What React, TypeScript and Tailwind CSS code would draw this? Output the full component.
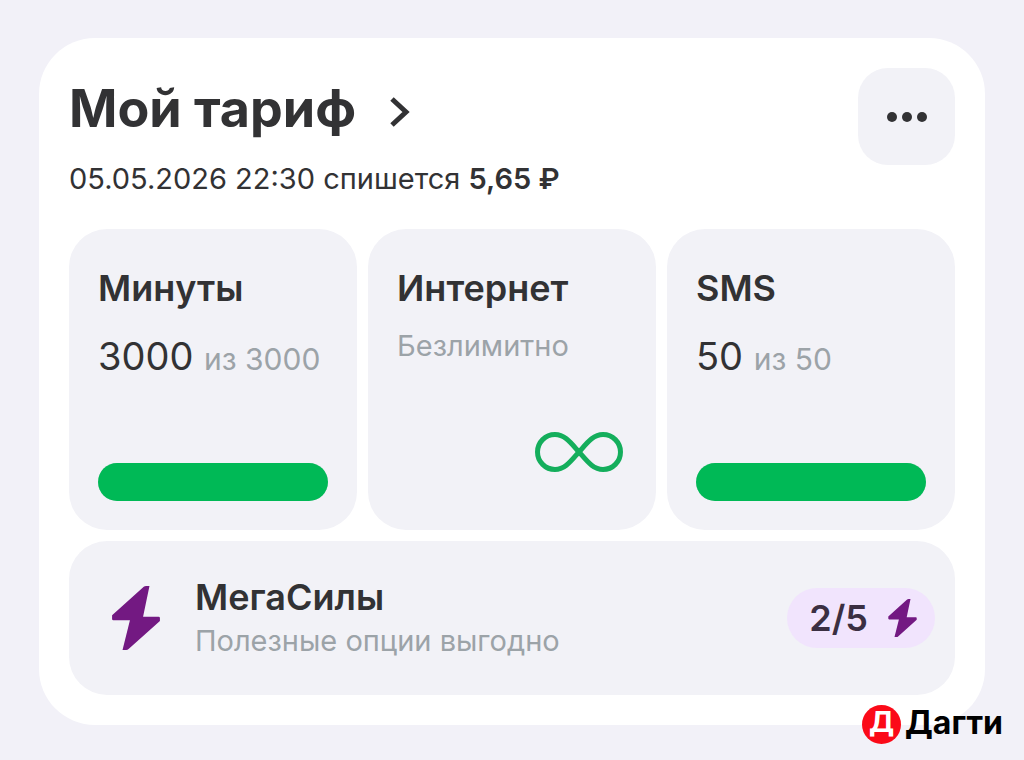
import type { ReactNode } from "react";

function BoltIcon({ className }: { className?: string }) {
  return (
    <svg viewBox="0 0 142 190" className={className} fill="#731982" aria-hidden="true">
      <path d="M94 2 Q97 0 101 0 H111 L92 91 H138 Q142 91 142 95 V104 L49 187 Q46 190 42 190 H31 L53 102 H4 Q0 102 0 98 V87 Z" />
    </svg>
  );
}

function InfinityIcon() {
  return (
    <svg viewBox="0 0 88 40" className="h-10 w-[88px]" fill="none" stroke="#14ae5c" strokeWidth="5" aria-hidden="true">
      <path d="M44 20 C36 11 30 2.5 20 2.5 A17.5 17.5 0 0 0 20 37.5 C30 37.5 36 29 44 20 C52 11 58 2.5 68 2.5 A17.5 17.5 0 0 1 68 37.5 C58 37.5 52 29 44 20 Z" />
    </svg>
  );
}

function Tile({ label, children }: { label: string; children: ReactNode }) {
  return (
    <section className="flex min-h-[301px] flex-col rounded-[38px] bg-[#f2f2f7] px-[29px] pt-[39px] pb-[29px]">
      <h2 className="text-[36px] leading-10 font-semibold">{label}</h2>
      {children}
    </section>
  );
}

function Quota({ left, total }: { left: number; total: number }) {
  return (
    <>
      <p className="mt-[26px] text-[38px] leading-11 whitespace-nowrap">
        {left} <span className="text-[30px] text-[#9ca3a8]">из {total}</span>
      </p>
      <div className="mt-auto h-[38px] rounded-full bg-[#dcdce3]">
        <div className="h-full rounded-full bg-[#00b956]" style={{ width: `${(left / total) * 100}%` }} />
      </div>
    </>
  );
}

export default function App() {
  return (
    <div className="relative min-h-screen bg-[#f2f1f8] px-[39px] py-[38px] font-['Inter',sans-serif] text-[#323234]">
      <main className="rounded-[56px] bg-white p-[30px]">
        <header className="flex items-start justify-between">
          <div className="pt-[11px]">
            <h1 className="text-[52px] leading-[60px] font-bold">
              <a href="#tariff" className="flex items-center gap-[34px]">
                Мой тариф
                <svg viewBox="0 0 20 30" className="mt-1.5 h-[30px] w-5" fill="none" stroke="currentColor" strokeWidth="5" aria-hidden="true">
                  <path d="M2 2 L16 15 L2 28" />
                </svg>
              </a>
            </h1>
            <p className="mt-5 text-[29px] leading-10">
              05.05.2026 22:30 спишется <b className="font-semibold">5,65 ₽</b>
            </p>
          </div>
          <button
            type="button"
            aria-label="Ещё"
            className="flex size-[97px] items-center justify-center gap-[5px] rounded-[30px] bg-[#f2f2f7]"
          >
            <span className="size-[10px] rounded-full bg-[#323234]" />
            <span className="size-[10px] rounded-full bg-[#323234]" />
            <span className="size-[10px] rounded-full bg-[#323234]" />
          </button>
        </header>

        <div className="mt-[30px] grid grid-cols-3 gap-[11px]">
          <Tile label="Минуты">
            <Quota left={3000} total={3000} />
          </Tile>
          <Tile label="Интернет">
            <p className="mt-4 text-[29px] leading-11 text-[#9ca3a8]">Безлимитно</p>
            <div className="mt-auto mr-1 mb-[29px] self-end">
              <InfinityIcon />
            </div>
          </Tile>
          <Tile label="SMS">
            <Quota left={50} total={50} />
          </Tile>
        </div>

        <a
          href="#megapowers"
          className="mt-[11px] flex min-h-[154px] items-center rounded-[38px] bg-[#f2f2f7] pr-5 pl-[43px]"
        >
          <BoltIcon className="h-16 w-12" />
          <div className="ml-[35px] flex-1 pt-0.5">
            <h2 className="text-[36px] leading-11 font-semibold">МегаСилы</h2>
            <p className="text-[29px] leading-11 text-[#9ca3a8]">Полезные опции выгодно</p>
          </div>
          <span className="flex h-[60px] items-center gap-5 rounded-[30px] bg-[#f1e4fd] pr-[18px] pl-[22px] text-[36px] leading-11 font-semibold text-[#3b2f42]">
            2/5
            <BoltIcon className="h-[38px] w-[29px]" />
          </span>
        </a>
      </main>

      <div className="absolute right-[21px] bottom-[18px] flex items-center gap-1 text-[32px] leading-10 font-bold text-black">
        <span className="flex size-[39px] items-center justify-center rounded-full bg-[#fb0a18] pb-1 text-[29px] text-white">
          Д
        </span>
        <span className="pb-0.5">Дагти</span>
      </div>
    </div>
  );
}
